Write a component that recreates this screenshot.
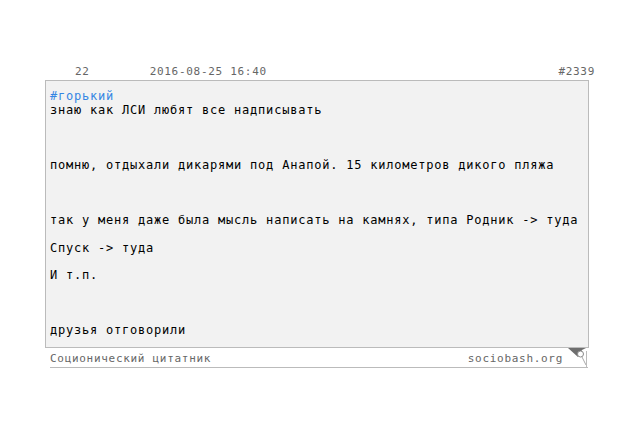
<script>
let g_lines = [
    "знаю как ЛСИ любят все надписывать",
    "",
    "",
    "",
    "помню, отдыхали дикарями под Анапой. 15 километров дикого пляжа",
    "",
    "",
    "",
    "так у меня даже была мысль написать на камнях, типа Родник -> туда",
    "",
    "Спуск -> туда",
    "",
    "И т.п.",
    "",
    "",
    "",
    "друзья отговорили"
]
</script>

<div class="quote">
    <div class="head">
        <span class="rating">22</span>
        <span class="date">2016-08-25 16:40</span>
        <span class="num">#2339</span>
    </div>
    <div class="body"><span class="tag">#горький</span><br>{g_lines.join("\n")}</div>
    <div class="foot">
        <span>Соционический цитатник</span>
        <span class="site">sociobash.org</span>
        <svg class="fold" width="21" height="21" viewBox="0 0 21 21">
            <path d="M1 0 L20 0 L20 19 Z" fill="#fff" />
            <path d="M1 0 L19 0 L15 2 L11 9 Z" fill="#6e6e6e" />
            <circle cx="13.5" cy="6" r="3" fill="#fff" stroke="#8a8a8a" />
            <path d="M15 9 L19 17" stroke="#aaa" fill="none" />
            <path d="M19.5 3 L19.5 20" stroke="#bbb" fill="none" />
        </svg>
    </div>
</div>

<style>
:global(body) {
    background: #fff;
}

.quote {
    font-family: "DejaVu Sans Mono", monospace;
    width: 550px;
    margin-left: 45px;
    padding-top: 64px;
}

.head {
    display: flex;
    font-size: 11px;
    letter-spacing: 0.7px;
    line-height: 15px;
    color: #666;
    margin-bottom: 1px;
}
.rating {
    margin-left: 30px;
}
.date {
    margin-left: 60px;
}
.num {
    margin-left: auto;
}

.body {
    box-sizing: border-box;
    width: 544px;
    height: 268px;
    border: 1px solid #bbb;
    background: #f2f2f2;
    padding: 9.4px 4px 0 4px;
    font-size: 12px;
    letter-spacing: 0.78px;
    line-height: 13.75px;
    color: #000;
    white-space: pre-wrap;
}
.tag {
    color: #3586e3;
}

.foot {
    position: relative;
    box-sizing: border-box;
    width: 538px;
    margin-left: 5px;
    height: 20px;
    padding-top: 1px;
    display: flex;
    justify-content: space-between;
    align-items: center;
    padding-right: 25px;
    font-size: 11px;
    letter-spacing: 0.7px;
    color: #666;
    border-bottom: 1px solid #bbb;
}
.fold {
    position: absolute;
    right: 0;
    top: 0;
}
</style>
